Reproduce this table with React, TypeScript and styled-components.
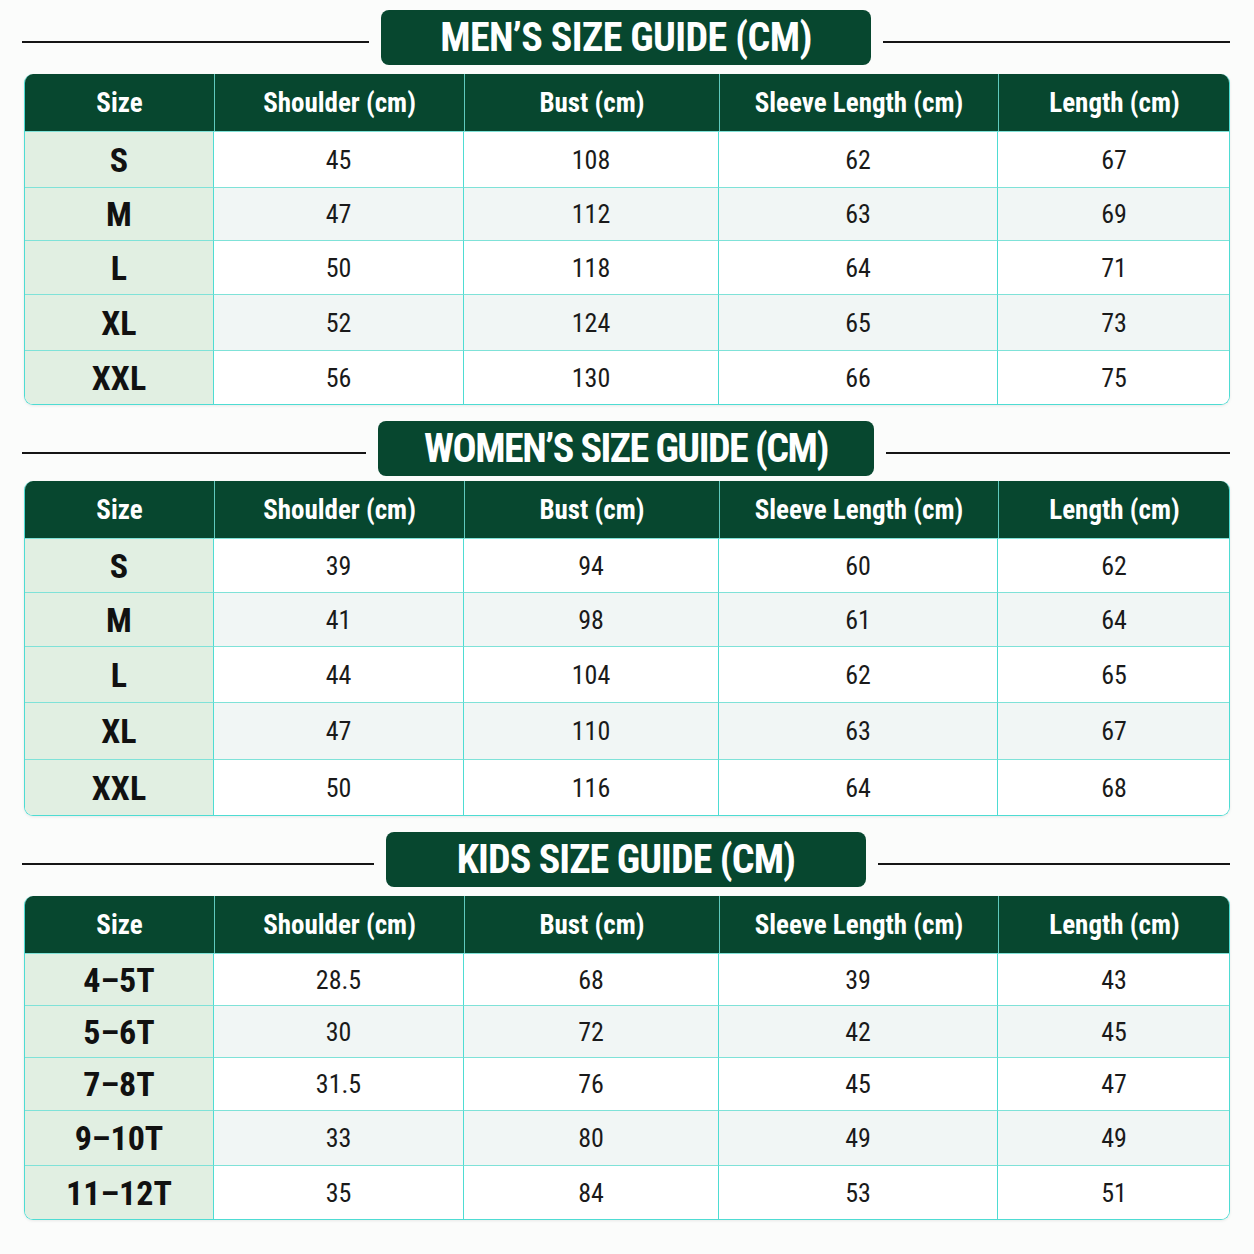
import styled, { createGlobalStyle } from "styled-components"

/**
 * Size guide tables: men, women, kids
 */

const GlobalStyle = createGlobalStyle`
   body {
      margin: 0;
      background: #fbfcfb;
      font-family: "Roboto Condensed", "Liberation Sans Narrow", "DejaVu Sans Condensed", "Roboto", sans-serif;
      font-stretch: condensed;
   }
`

const Page = styled.div`
   width: 1254px;
   padding: 10px 24px 0 22px;
   box-sizing: border-box;
   display: flex;
   flex-direction: column;
`

const Section = styled.section<{ gap: number }>`
   display: flex;
   flex-direction: column;
   gap: ${p => p.gap}px;
   margin-bottom: 16px;
`

const TitleRow = styled.div`
   display: flex;
   align-items: center;
   gap: 12px;
`

/* the rules sit a little below the badge's middle */
const Rule = styled.div`
   flex: 1;
   height: 2px;
   margin-top: 9px;
   background: #151515;
`

const TitleBadge = styled.h2<{ width: number; tracking: number }>`
   margin: 0;
   width: ${p => p.width}px;
   height: 55px;
   border-radius: 8px;
   background: #07472f;
   color: #fff;
   display: flex;
   align-items: center;
   justify-content: center;
   font-size: 40px;
   font-weight: 700;
   letter-spacing: ${p => p.tracking}px;
`

const Table = styled.div`
   margin-left: 2px;
   display: grid;
   grid-template-columns: 189px 250px 255px 279px 232px;
   border: 1.5px solid #4edcd3;
   border-top: none;
   border-radius: 9px;
   overflow: hidden;
   box-shadow: 0 1px 3px rgba(0, 0, 0, 0.08);
`

const HeadCell = styled.div`
   height: 57px;
   background: #07472f;
   color: #fff;
   display: flex;
   align-items: center;
   justify-content: center;
   font-size: 27px;
   font-weight: 700;
   & + & {
      border-left: 1px solid #5fc9bd;
   }
`

const SizeCell = styled.div<{ height: number }>`
   height: ${p => p.height}px;
   background: #e1efe2;
   color: #111;
   display: flex;
   align-items: center;
   justify-content: center;
   font-size: 34px;
   font-weight: 700;
   border-top: 1.5px solid #7fe2d8;
   border-right: 1.5px solid #4edcd3;
   box-sizing: border-box;
`

const ValueCell = styled.div<{ height: number; alt: boolean; last: boolean }>`
   height: ${p => p.height}px;
   background: ${p => (p.alt ? "#f1f6f5" : "#ffffff")};
   color: #1a1a1a;
   display: flex;
   align-items: center;
   justify-content: center;
   font-size: 26px;
   font-weight: 400;
   border-top: 1.5px solid #7fe2d8;
   border-right: ${p => (p.last ? "none" : "1.5px solid #4edcd3")};
   box-sizing: border-box;
`

const headers = ["Size", "Shoulder (cm)", "Bust (cm)", "Sleeve Length (cm)", "Length (cm)"]

type Guide = {
   title: string
   badgeWidth: number
   tracking: number
   gap: number
   rowHeights: number[]
   rows: [string, string, string, string, string][]
}

const guides: Guide[] = [
   {
      title: "MEN’S SIZE GUIDE (CM)",
      badgeWidth: 490,
      tracking: -0.6,
      gap: 9,
      rowHeights: [56, 53, 54, 56, 54],
      rows: [
         ["S", "45", "108", "62", "67"],
         ["M", "47", "112", "63", "69"],
         ["L", "50", "118", "64", "71"],
         ["XL", "52", "124", "65", "73"],
         ["XXL", "56", "130", "66", "75"],
      ],
   },
   {
      title: "WOMEN’S SIZE GUIDE (CM)",
      badgeWidth: 496,
      tracking: -1.5,
      gap: 5,
      rowHeights: [54, 54, 56, 57, 56],
      rows: [
         ["S", "39", "94", "60", "62"],
         ["M", "41", "98", "61", "64"],
         ["L", "44", "104", "62", "65"],
         ["XL", "47", "110", "63", "67"],
         ["XXL", "50", "116", "64", "68"],
      ],
   },
   {
      title: "KIDS SIZE GUIDE (CM)",
      badgeWidth: 480,
      tracking: -0.9,
      gap: 9,
      rowHeights: [52, 52, 53, 55, 54],
      rows: [
         ["4–5T", "28.5", "68", "39", "43"],
         ["5–6T", "30", "72", "42", "45"],
         ["7–8T", "31.5", "76", "45", "47"],
         ["9–10T", "33", "80", "49", "49"],
         ["11–12T", "35", "84", "53", "51"],
      ],
   },
]

function SizeTable({ guide }: { guide: Guide }) {
   return (
      <Section gap={guide.gap}>
         <TitleRow>
            <Rule />
            <TitleBadge width={guide.badgeWidth} tracking={guide.tracking}>
               {guide.title}
            </TitleBadge>
            <Rule />
         </TitleRow>
         <Table>
            {headers.map(h => (
               <HeadCell key={h}>{h}</HeadCell>
            ))}
            {guide.rows.map((row, i) => (
               <>
                  <SizeCell key={row[0]} height={guide.rowHeights[i]}>{row[0]}</SizeCell>
                  {row.slice(1).map((v, j) => (
                     <ValueCell
                        key={row[0] + j}
                        height={guide.rowHeights[i]}
                        alt={i % 2 === 1}
                        last={j === 3}
                     >
                        {v}
                     </ValueCell>
                  ))}
               </>
            ))}
         </Table>
      </Section>
   )
}

export default function App() {
   return (
      <>
         <GlobalStyle />
         <Page>
            {guides.map(g => (
               <SizeTable key={g.title} guide={g} />
            ))}
         </Page>
      </>
   )
}
